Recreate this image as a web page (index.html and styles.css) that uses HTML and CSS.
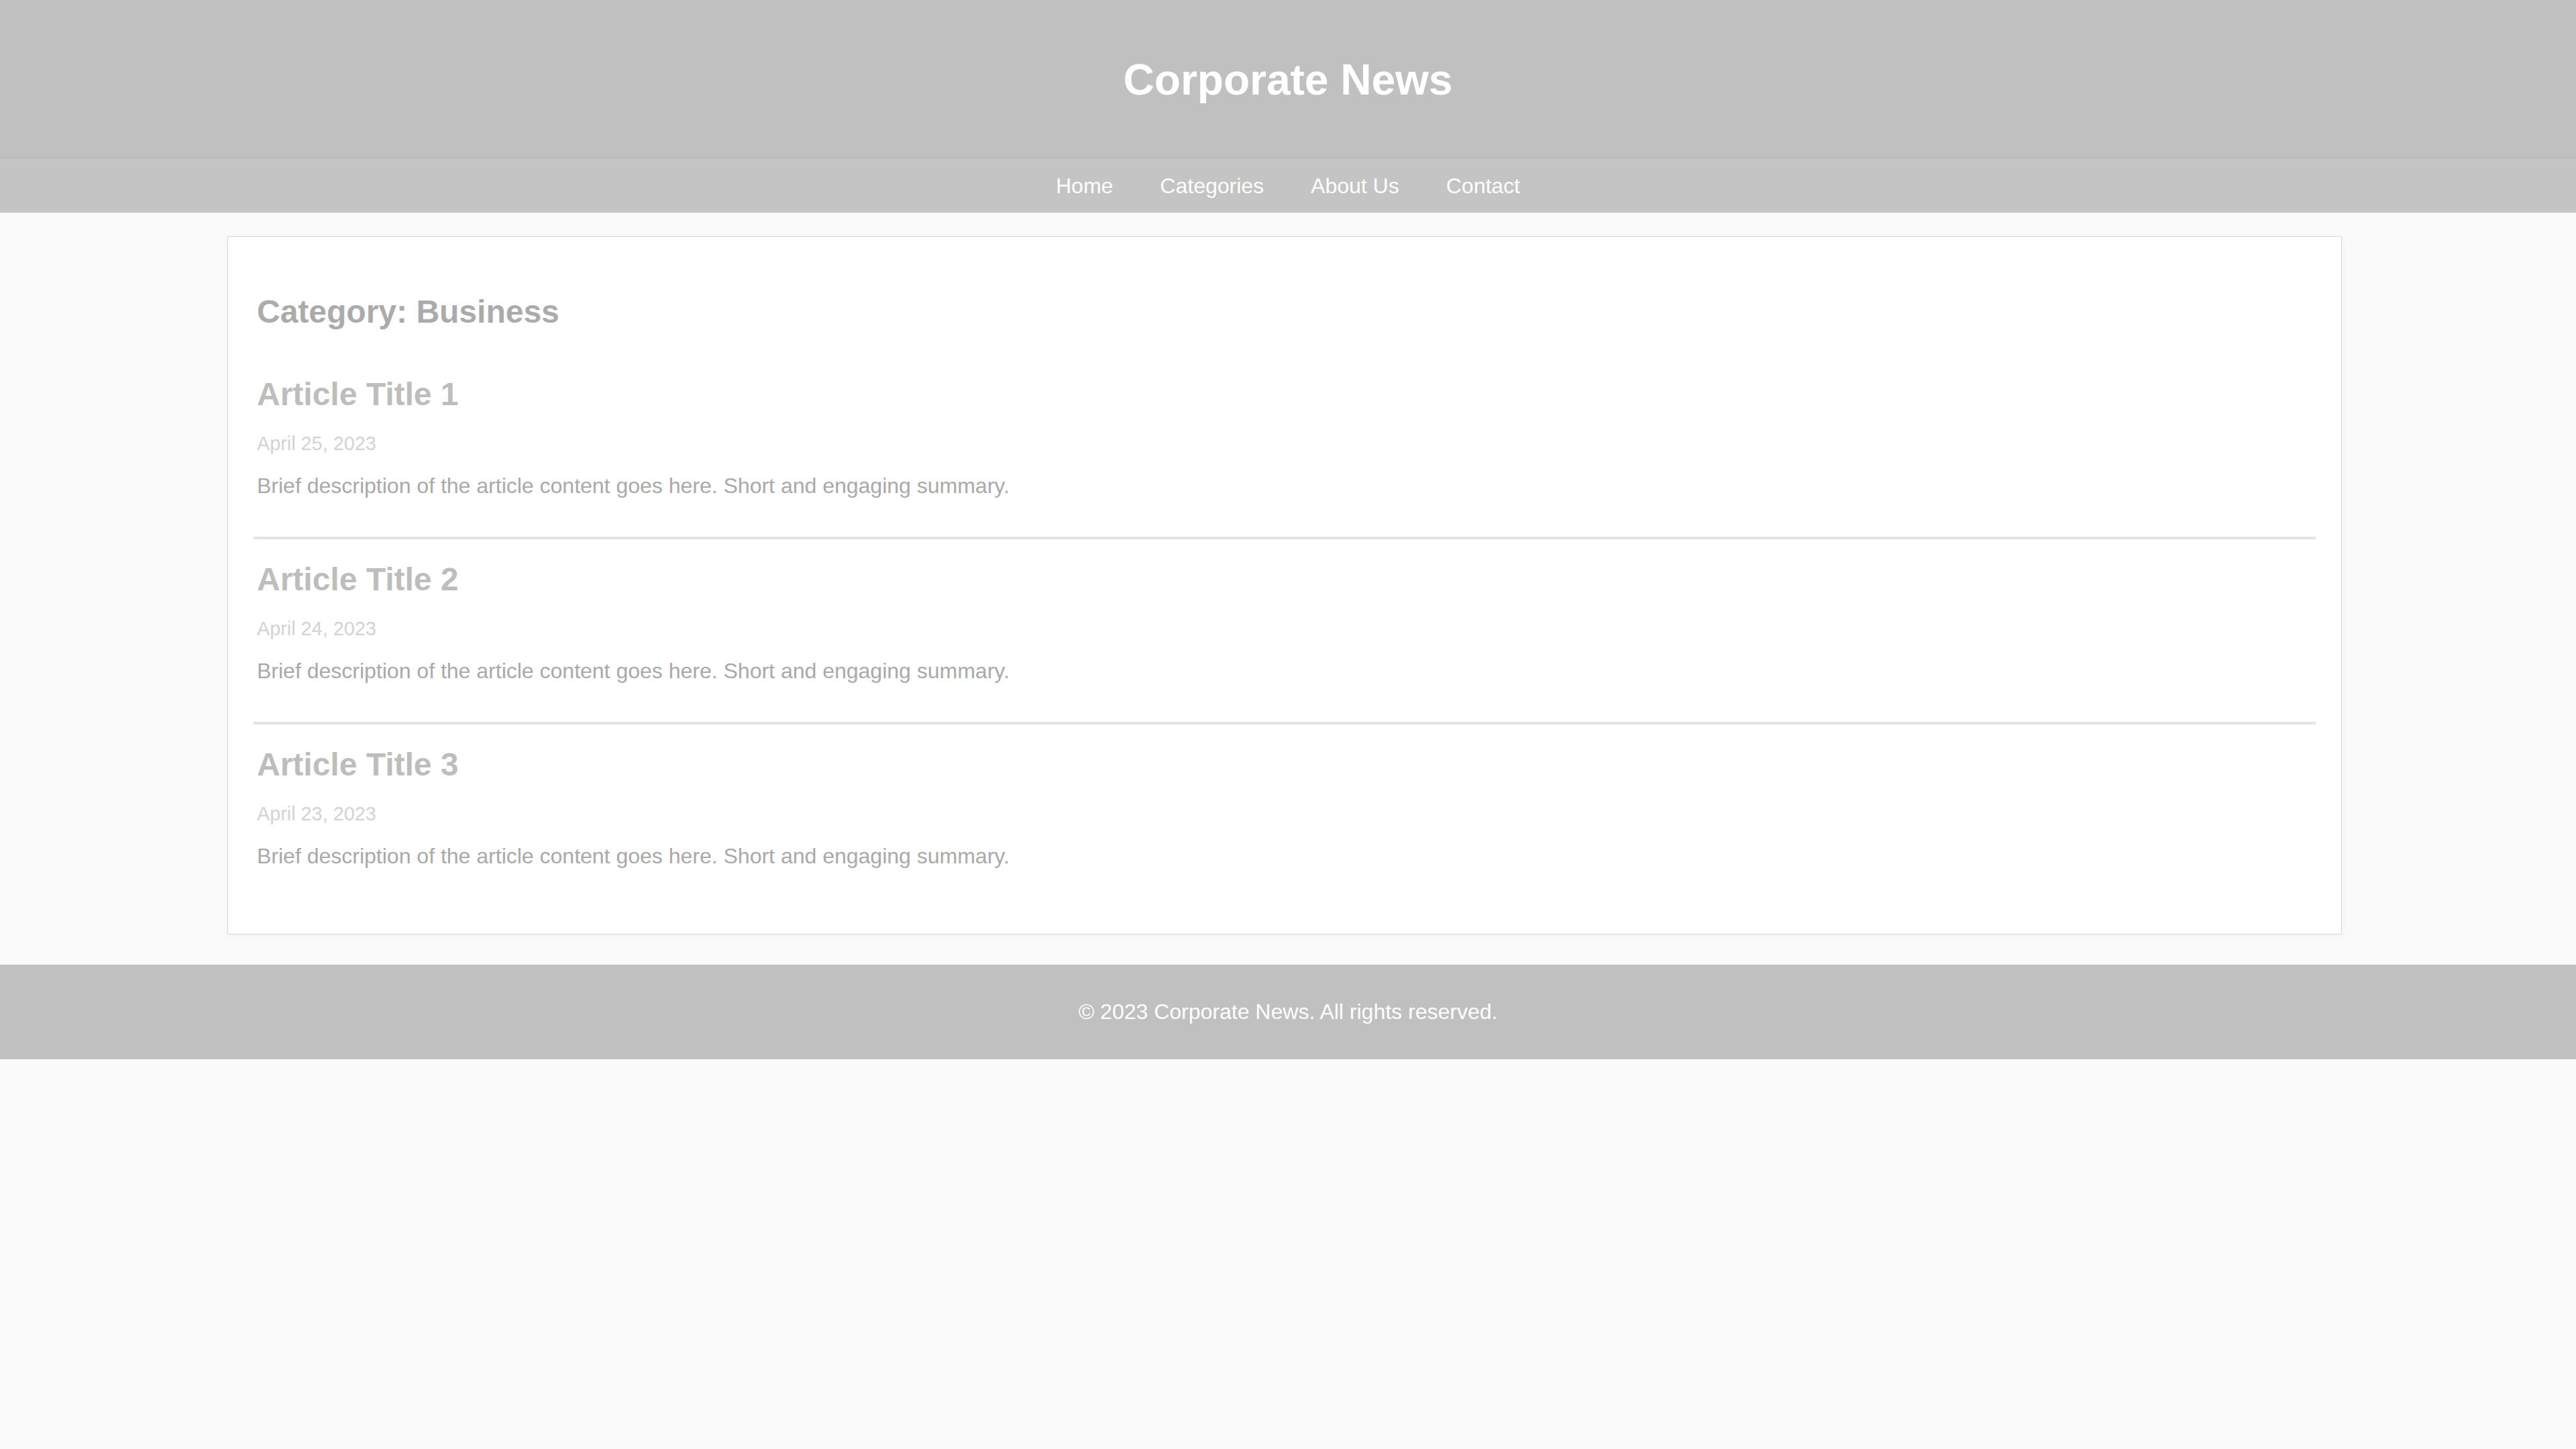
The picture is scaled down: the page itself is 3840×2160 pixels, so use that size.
FILE: index.html
```html
<!DOCTYPE html>
<html lang="en">
<head>
<meta charset="utf-8">
<title>Category: Business - Corporate News</title>
<link rel="stylesheet" href="styles.css">
</head>
<body>
<header class="site-header">
  <h1 class="site-title">Corporate News</h1>
</header>
<nav class="site-nav">
  <a href="#" class="nav-link">Home</a>
  <a href="#" class="nav-link">Categories</a>
  <a href="#" class="nav-link">About Us</a>
  <a href="#" class="nav-link">Contact</a>
</nav>
<main class="card">
  <h2 class="category-title">Category: Business</h2>
  <article class="article">
    <h3 class="article-title">Article Title 1</h3>
    <p class="article-date">April 25, 2023</p>
    <p class="article-desc">Brief description of the article content goes here. Short and engaging summary.</p>
  </article>
  <article class="article">
    <h3 class="article-title">Article Title 2</h3>
    <p class="article-date">April 24, 2023</p>
    <p class="article-desc">Brief description of the article content goes here. Short and engaging summary.</p>
  </article>
  <article class="article">
    <h3 class="article-title">Article Title 3</h3>
    <p class="article-date">April 23, 2023</p>
    <p class="article-desc">Brief description of the article content goes here. Short and engaging summary.</p>
  </article>
</main>
<footer class="site-footer">
  <p class="footer-text">&copy; 2023 Corporate News. All rights reserved.</p>
</footer>
</body>
</html>
```
FILE: styles.css
```css
* {
  box-sizing: border-box;
}

html, body {
  margin: 0;
  padding: 0;
}

body {
  background: #fafafa;
  font-family: "Liberation Sans", Arial, Helvetica, sans-serif;
  font-size: 32px;
  color: #aaaaaa;
  min-height: 2160px;
}

.site-header {
  background: #c0c0c0;
  padding: 82px 0 79px;
  border-bottom: 1px solid #b6b6b6;
  text-align: center;
}

.site-title {
  margin: 0;
  font-size: 64px;
  line-height: 74px;
  font-weight: 700;
  color: #ffffff;
}

.site-nav {
  background: #c4c4c4;
  padding: 23px 0 21px;
  display: flex;
  justify-content: center;
  gap: 70px;
  line-height: 37px;
}

.nav-link {
  color: #ffffff;
  text-decoration: none;
  font-size: 32px;
}

.card {
  display: block;
  width: 3152px;
  margin: 35px 0 45px calc(50% - 1581px);
  background: #ffffff;
  border: 1px solid #d6d6d6;
  box-shadow: 0 3px 10px rgba(0, 0, 0, 0.035);
  padding: 84px 38px 40px;
}

.category-title {
  margin: 0 0 35px;
  padding: 0 5px;
  font-size: 48px;
  line-height: 56px;
  font-weight: 700;
  color: #ababab;
}

.article {
  padding: 32px 5px 57px;
  border-bottom: 4px solid #e3e3e3;
}

.article:last-child {
  border-bottom: none;
}

.article-title {
  margin: 0 0 28px;
  font-size: 48px;
  line-height: 56px;
  font-weight: 700;
  color: #bdbdbd;
}

.article-date {
  margin: 0 0 28px;
  font-size: 28.8px;
  line-height: 34px;
  color: #d3d3d3;
}

.article-desc {
  margin: 0;
  font-size: 32px;
  line-height: 37px;
  color: #a9a9a9;
}

.site-footer {
  background: #c0c0c0;
  padding: 52px 0 52px;
  text-align: center;
}

.footer-text {
  margin: 0;
  font-size: 32px;
  line-height: 37px;
  color: #ffffff;
}
```
